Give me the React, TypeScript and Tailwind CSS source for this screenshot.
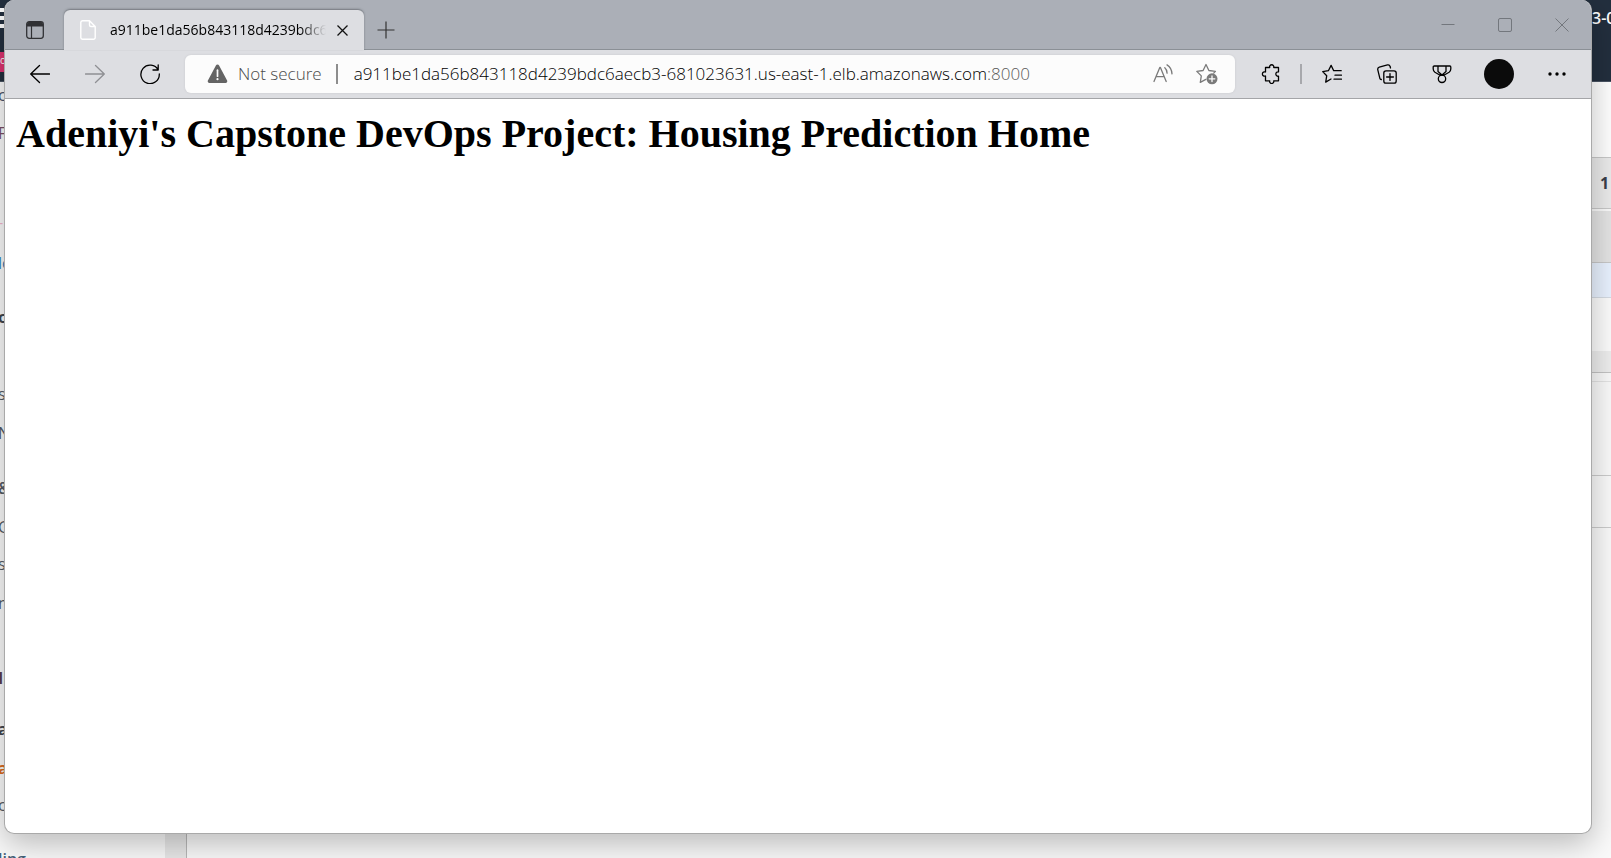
import type { ReactNode } from "react";

const HOST = "a911be1da56b843118d4239bdc6aecb3-681023631.us-east-1.elb.amazonaws.com";

function Icon({ children, className = "size-5 text-black" }: { children: ReactNode; className?: string }) {
  return (
    <svg
      viewBox="0 0 20 20"
      className={`block shrink-0 ${className}`}
      fill="none"
      stroke="currentColor"
      strokeWidth="1.3"
      strokeLinecap="round"
      strokeLinejoin="round"
      aria-hidden="true"
    >
      {children}
    </svg>
  );
}

function IconButton({ label, className = "w-10", children }: { label: string; className?: string; children: ReactNode }) {
  return (
    <button type="button" aria-label={label} className={`flex h-9 shrink-0 items-center justify-center ${className}`}>
      {children}
    </button>
  );
}

const sideItems = [
  { text: "c", style: "h-[25px] text-[#47536b]" },
  { text: "F", style: "h-[38px] text-[#7a4d66]" },
  { text: "-", style: "h-[89px] text-[#f3b6cc]" },
  { text: "lo", style: "h-[41px] text-[#2f7db5]" },
  { text: "c", style: "h-[54px] font-bold text-[#3f454d]" },
  { text: "s", style: "h-[77px] text-[#545b64]" },
  { text: "N", style: "h-[39px] text-[#545b64]" },
  { text: "&", style: "h-[55px] font-semibold text-[#545b64]" },
  { text: "G", style: "h-[39px] text-[#545b64]" },
  { text: "s", style: "h-[37px] text-[#545b64]" },
  { text: "nt", style: "h-[39px] text-[#545b64]" },
  { text: "In", style: "h-[75px] font-bold text-[#5c3a4a]" },
  { text: "a", style: "h-[51px] font-bold text-[#3f454d]" },
  { text: "a", style: "h-[39px] font-bold text-[#d96a1c]" },
  { text: "c", style: "h-[37px] text-[#545b64]" },
  { text: "ling", style: "h-[54px] font-semibold text-[#46627a]" },
];

function BackgroundConsole() {
  return (
    <div className="flex h-full flex-col text-base">
      <header className="flex h-[82px] shrink-0 justify-between overflow-hidden border-b border-[#4a5463] bg-[#232f3e] text-white">
        <div className="flex w-5 flex-col pt-2">
          <span className="h-1 w-1 bg-white" />
          <span className="mt-1 h-1 w-1 bg-white" />
          <span className="mt-1 h-1 w-1 bg-white" />
          <span className="mt-6 h-5 bg-[#dd3370] text-[10px] leading-4">o</span>
        </div>
        <span className="w-[19px] pt-1.5 leading-6 font-semibold whitespace-nowrap">3-0</span>
      </header>
      <div className="flex min-h-0 flex-1">
        <aside className="w-[165px] shrink-0 overflow-hidden bg-[#fafafa]">
          <ul className="-ml-0.5">
            {sideItems.map((item, i) => (
              <li key={i} className={`flex items-end whitespace-nowrap ${item.style}`}>
                {item.text}
              </li>
            ))}
          </ul>
        </aside>
        <div className="w-[22px] shrink-0 border-r border-[#b8b8b8] bg-[#e8e8e8]" />
        <main className="flex min-w-0 flex-1 flex-col bg-[#fafafa]">
          <div className="h-[75px] shrink-0 bg-white" />
          <div className="flex h-[52px] shrink-0 items-center justify-end border-y border-[#c8c8c8] bg-[#ebebeb] font-bold text-[#3a3f4a]">
            <span className="w-[11px]">1</span>
          </div>
          <div className="mt-0.5 h-[52px] shrink-0 border-b border-[#c8c8c8] bg-[#e4e4e4]" />
          <div className="h-[35px] shrink-0 border-b border-[#d5dbe3] bg-[#e9f2ff]" />
          <div className="h-[53px] shrink-0 bg-[#fcfcfc]" />
          <div className="h-[22px] shrink-0 border-b border-[#c4c4c4] bg-[#eeeeee]" />
          <div className="h-[9px] shrink-0 border-b border-[#e4e4e4]" />
          <div className="h-[94px] shrink-0 border-b border-[#cccccc]" />
          <div className="h-[52px] shrink-0 border-b border-[#cccccc]" />
        </main>
      </div>
    </div>
  );
}

function TabStrip() {
  return (
    <div className="flex h-[50px] shrink-0 items-end bg-[#abafb7] shadow-[inset_0_-1px_0_#8b9096]">
      <button type="button" aria-label="Tab actions" className="flex h-10 w-[59px] items-center justify-center">
        <svg viewBox="0 0 18 18" className="size-[18px] text-[#303134]" fill="none" stroke="currentColor" aria-hidden="true">
          <rect x="0.7" y="0.7" width="16.6" height="16.6" rx="2.5" strokeWidth="1.3" />
          <path d="M1 3.2a2.3 2.3 0 0 1 2.2-2.4h11.6A2.3 2.3 0 0 1 17 3.2V5H1z" fill="currentColor" stroke="none" />
          <path d="M1 5h16M5.5 5v12" strokeWidth="1.2" />
        </svg>
      </button>
      <div className="relative flex h-10 w-[300px] items-center rounded-t-md bg-[#dddee2] pr-2 pl-4 shadow-[0_-1px_2px_rgba(60,64,70,0.5)]">
        <svg viewBox="0 0 16 20" className="h-5 w-4 text-white" fill="none" stroke="currentColor" strokeWidth="1.4" strokeLinejoin="round" aria-hidden="true">
          <path d="M2.500.8h7L15.200 6.500v10.900a1.800 1.800 0 0 1-1.800 1.800H2.500A1.800 1.800 0 0 1 .8 17.400V2.600A1.800 1.800 0 0 1 2.500.8zM9.500.8V5a1.500 1.500 0 0 0 1.500 1.500h4.200" />
        </svg>
        <span className="ml-3.5 min-w-0 flex-1 overflow-hidden mask-r-from-88% text-sm whitespace-nowrap text-black">{HOST}</span>
        <button type="button" aria-label="Close tab" className="ml-0.5 flex size-7 items-center justify-center">
          <svg viewBox="0 0 11 11" className="size-[11px]" stroke="#111" strokeWidth="1.3" aria-hidden="true">
            <path d="M.5.5l10 10M10.500.5l-10 10" />
          </svg>
        </button>
      </div>
      <button type="button" aria-label="New tab" className="ml-0.5 flex size-10 items-center justify-center">
        <svg viewBox="0 0 18 18" className="size-[18px]" stroke="#333" strokeWidth="1.2" aria-hidden="true">
          <path d="M9 .5v17M.5 9h17" />
        </svg>
      </button>
      <div className="ml-auto flex self-start text-[#73777d]">
        <button type="button" aria-label="Minimize" className="flex h-[50px] w-[57px] items-center justify-center">
          <svg viewBox="0 0 14 14" className="size-3.5" stroke="currentColor" aria-hidden="true">
            <path d="M.5 6.500h13" />
          </svg>
        </button>
        <button type="button" aria-label="Maximize" className="flex h-[50px] w-[57px] items-center justify-center">
          <svg viewBox="0 0 14 14" className="size-3.5" fill="none" stroke="currentColor" aria-hidden="true">
            <rect x="0.5" y="0.5" width="13" height="13" rx="1.5" />
          </svg>
        </button>
        <button type="button" aria-label="Close" className="flex h-[50px] w-[58px] items-center justify-center">
          <svg viewBox="0 0 14 14" className="size-3.5" stroke="currentColor" aria-hidden="true">
            <path d="M.5.5l13 13M13.500.5l-13 13" />
          </svg>
        </button>
      </div>
    </div>
  );
}

function AddressBar() {
  return (
    <form
      className="flex h-[38px] min-w-0 flex-1 items-center rounded-md bg-[#fcfcfc] pr-1.5 pl-[22px] text-[17px] font-light shadow-[0_0_3px_rgba(0,0,0,0.08)]"
      onSubmit={(e) => e.preventDefault()}
    >
      <button type="button" className="flex shrink-0 items-center gap-2.5 text-[#4a4a4a]">
        <svg viewBox="0 0 21 20" className="h-5 w-[21px]" aria-hidden="true">
          <path d="M8.900 1.400a1.800 1.800 0 0 1 3.200 0l8 15.200A1.700 1.700 0 0 1 18.600 19H2.400A1.700 1.700 0 0 1 .9 16.600z" fill="#646464" />
          <path d="M10.500 6.200v6" stroke="#fcfcfc" strokeWidth="1.700" strokeLinecap="round" />
          <circle cx="10.500" cy="15.200" r="1.100" fill="#fcfcfc" />
        </svg>
        Not secure
      </button>
      <span className="mr-4 ml-3.5 h-5 w-0.5 shrink-0 bg-[#8d8d8d]" />
      <input
        aria-label="Address"
        defaultValue={HOST}
        spellCheck={false}
        className="field-sizing-content min-w-0 bg-transparent p-0 text-black outline-none"
      />
      <span className="text-[#5a5a5a]">:8000</span>
      <div className="ml-auto flex shrink-0 items-center text-[#7a7a7a]">
        <IconButton label="Read this page aloud" className="w-11">
          <Icon className="size-5 text-[#7a7a7a]">
            <path d="M1 17.500L6.800 3.500h.6l5.800 14M3 12.700h8.200" />
            <path d="M11.800 3.800c1.500 1.300 2.300 3.200 2.300 5.400M14 .9c3 1.900 4.800 5 5 9" />
          </Icon>
        </IconButton>
        <IconButton label="Add this page to favorites" className="w-11">
          <svg viewBox="0 0 22 22" className="size-[22px]" fill="none" stroke="currentColor" strokeWidth="1.300" strokeLinejoin="round" strokeLinecap="round" aria-hidden="true">
            <path d="M9.800 16.400l-5.500 3 1-6.500L.8 8.400l6.300-.9L10 1.500l2.900 6 6.500.9-1.700 1.700" />
            <circle cx="16" cy="15.800" r="5.500" fill="currentColor" stroke="none" />
            <path d="M16 13v5.600M13.200 15.800h5.600" stroke="#fcfcfc" />
          </svg>
        </IconButton>
      </div>
    </form>
  );
}

function Toolbar() {
  return (
    <div className="flex h-[49px] shrink-0 items-center border-b border-[#a4a5a8] bg-[#dddee2]">
      <nav className="mr-2 ml-[7px] flex shrink-0">
        <IconButton label="Back" className="w-[55px]">
          <Icon>
            <path d="M19.500 10H.7M9.500 1.500L.7 10l8.800 8.500" />
          </Icon>
        </IconButton>
        <IconButton label="Forward" className="w-[55px]">
          <Icon className="size-5 text-[#8f9094]">
            <path d="M.5 10h18.800M10.500 1.500l8.800 8.500-8.800 8.500" />
          </Icon>
        </IconButton>
        <IconButton label="Refresh" className="w-[55px]">
          <Icon>
            <path d="M18.200 6A9.200 9.200 0 1 0 19.300 10M18.200.8V6H13" />
          </Icon>
        </IconButton>
      </nav>
      <AddressBar />
      <div className="ml-2 flex shrink-0 items-center">
        <IconButton label="Extensions" className="w-[55px]">
          <Icon>
            <path d="M4.500 3.500h4.200a2.100 2.100 0 1 1 4 0h4.800v4.400a2.200 2.200 0 1 0 0 4.300v4.600h-4.800a2.100 2.100 0 1 1-4 0H4.500V12a2.200 2.200 0 1 1 0-4z" />
          </Icon>
        </IconButton>
        <span className="mx-0.5 h-5 w-0.5 bg-[#a7a8ac]" />
        <IconButton label="Favorites" className="w-[55px]">
          <Icon>
            <path d="M9 15l-5.300 3.100 1-6.300L.7 7.600l5.700-.9 2.700-5.300 2.600 5.300h7.500M13 11.200h6.500M12 15.200h7.500" />
          </Icon>
        </IconButton>
        <IconButton label="Collections" className="w-[55px]">
          <Icon>
            <rect x="6.800" y="6.800" width="12.400" height="12.400" rx="2.200" />
            <path d="M13 9.600v6.800M9.600 13h6.800M4.300 15.500a2 2 0 0 1-1.500-1.300L.8 5.800a2.200 2.200 0 0 1 1.500-2.600L10.500.9A2 2 0 0 1 13 2.300l.5 1.700" />
          </Icon>
        </IconButton>
        <IconButton label="Browser essentials" className="w-[55px]">
          <Icon>
            <path d="M2.200 2h15.600a1 1 0 0 1 1 1v2a4 4 0 0 1-1.700 3.200L12.300 11H7.700L2.900 8.200A4 4 0 0 1 1.200 5V3a1 1 0 0 1 1-1zM6 2v5.500l4 3.500 4-3.500V2" />
            <circle cx="10" cy="14.800" r="3.700" />
          </Icon>
        </IconButton>
        <IconButton label="Profile" className="w-[60px]">
          <span className="size-[30px] rounded-full bg-[#0b0b0b]" />
        </IconButton>
        <IconButton label="Settings and more" className="mr-[7px] w-[55px]">
          <svg viewBox="0 0 18 4" className="h-1 w-[18px]" aria-hidden="true">
            <circle cx="2" cy="2" r="1.700" />
            <circle cx="9" cy="2" r="1.700" />
            <circle cx="16" cy="2" r="1.700" />
          </svg>
        </IconButton>
      </div>
    </div>
  );
}

export default function App() {
  return (
    <div className="relative h-screen overflow-hidden font-['Open_Sans','Noto_Sans',sans-serif]">
      <BackgroundConsole />
      <section className="absolute top-0 right-[19px] bottom-6 left-1 flex flex-col overflow-hidden rounded-[10px] border border-t-0 border-[#a9a9a9] bg-white shadow-[0_10px_32px_rgba(0,0,0,0.26)]">
        <TabStrip />
        <Toolbar />
        <main className="flex-1 px-[11px] pt-3">
          <h1 className="font-['Liberation_Serif',serif] text-[40px] leading-[45px] font-bold text-black">
            Adeniyi's Capstone DevOps Project: Housing Prediction Home
          </h1>
        </main>
      </section>
    </div>
  );
}
